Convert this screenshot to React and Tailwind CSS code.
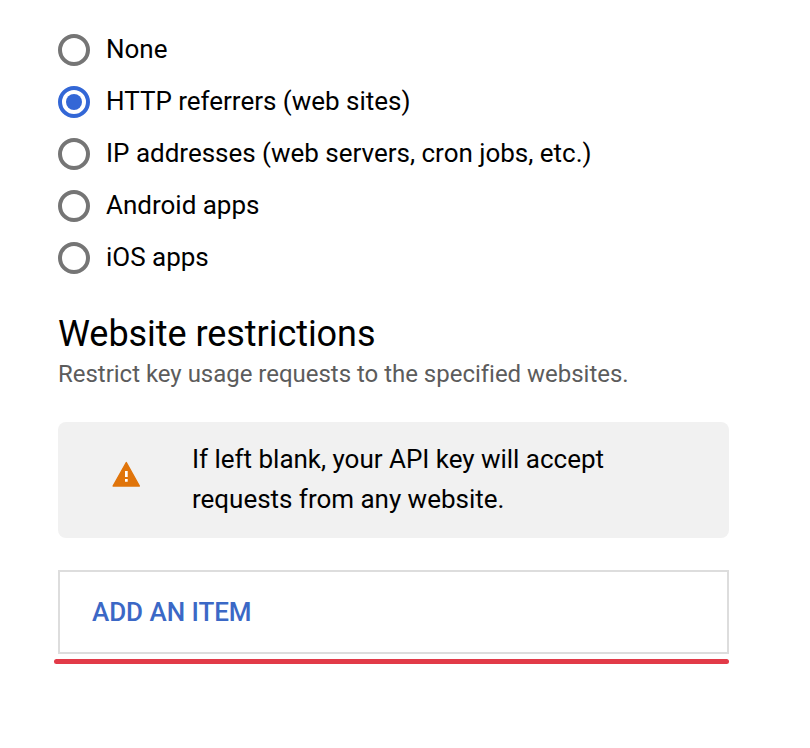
import React from "react";

const options = [
  { label: "None" },
  { label: "HTTP referrers (web sites)", selected: true },
  { label: "IP addresses (web servers, cron jobs, etc.)" },
  { label: "Android apps" },
  { label: "iOS apps" },
];

function Radio({ label, selected }) {
  return (
    <label className="flex h-[52px] items-center gap-4">
      <span
        className={
          selected
            ? "flex size-8 items-center justify-center rounded-full border-4 border-[#3367d6]"
            : "flex size-8 items-center justify-center rounded-full border-4 border-[#757575]"
        }
      >
        {selected && <span className="size-4 rounded-full bg-[#3367d6]" />}
      </span>
      <span className="pb-0.5 text-[26px] leading-8 tracking-[-0.01px] whitespace-nowrap text-black">
        {label}
      </span>
    </label>
  );
}

export default function App() {
  return (
    <main className="h-[748px] w-[810px] overflow-hidden bg-white pt-6 pl-[58px] font-['Roboto',sans-serif]">
      <div>
        {options.map((o) => (
          <Radio key={o.label} label={o.label} selected={o.selected} />
        ))}
      </div>
      <h2 className="mt-[26px] text-[36px] leading-[48px] tracking-[-0.05px] whitespace-nowrap text-black">
        Website restrictions
      </h2>
      <p className="text-[24px] leading-8 tracking-[-0.02px] whitespace-nowrap text-[#5c5c5c]">
        Restrict key usage requests to the specified websites.
      </p>
      <div className="mt-8 flex h-[116px] w-[671px] items-center rounded-lg bg-[#f1f1f1] pl-[54px]">
        <svg viewBox="0 0 28 26" className="mt-[-12px] h-[26px] w-7">
          <path
            d="M14.3 1.5 27.4 25H1.1Z"
            fill="#e0740a"
            stroke="#e0740a"
            strokeWidth="1.4"
            strokeLinejoin="round"
          />
          <path d="M13 10h2.7v6H13zM13 18h2.7v2.7H13z" fill="#fff" />
        </svg>
        <p className="ml-[52px] pb-0.5 text-[26px] leading-10 tracking-[-0.02px] whitespace-nowrap text-black">
          If left blank, your API key will accept
          <br />
          requests from any website.
        </p>
      </div>
      <button className="mt-8 flex h-[84px] w-[671px] items-center border-2 border-[#dddddd] pl-8 text-[26px] font-medium tracking-[-0.05px] text-[#3b68c6]">
        ADD AN ITEM
      </button>
      <div className="mt-[5px] -ml-1 h-[5px] w-[675px] rounded-full bg-[#e23a48]" />
    </main>
  );
}
